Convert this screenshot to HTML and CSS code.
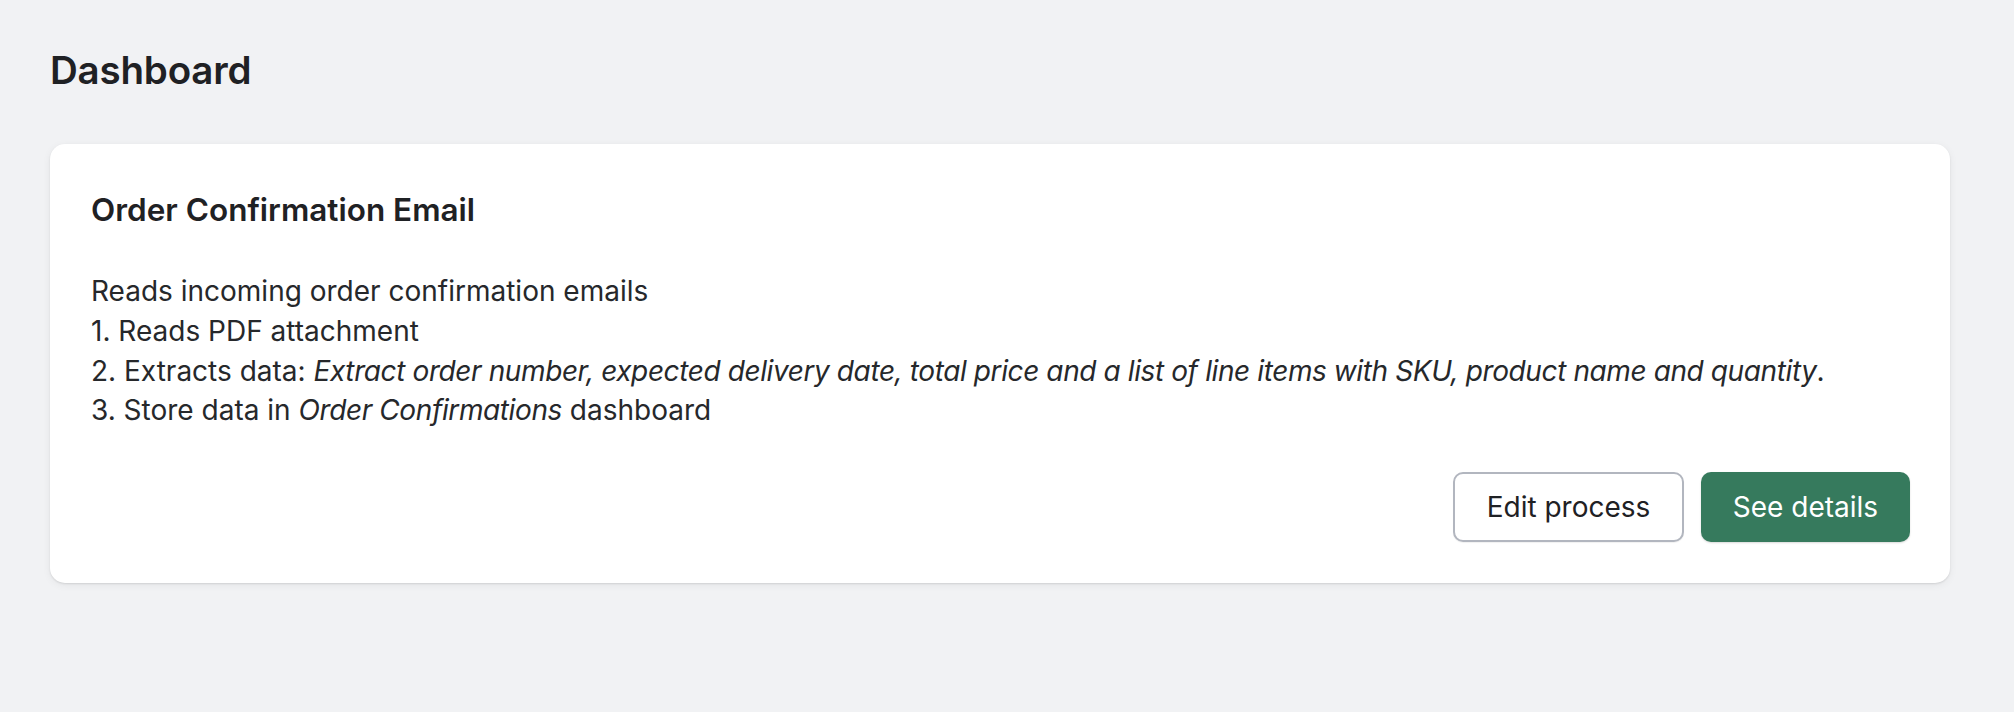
FILE: index.html
```html
<!DOCTYPE html>
<html lang="en">
<head>
<meta charset="utf-8">
<title>Dashboard</title>
<link rel="stylesheet" href="styles.css">
</head>
<body>
<main class="page">
  <h1 class="page-title">Dashboard</h1>
  <section class="card">
    <h2 class="card-title">Order Confirmation Email</h2>
    <div class="card-body">
      <p class="line">Reads incoming order confirmation emails</p>
      <p class="line">1. Reads PDF attachment</p>
      <p class="line">2. Extracts data: <em>Extract order number, expected delivery date, total price and a list of line items with SKU, product name and quantity</em>.</p>
      <p class="line">3. Store data in <em>Order Confirmations</em> dashboard</p>
    </div>
    <div class="card-actions">
      <button class="btn btn-secondary" type="button">Edit process</button>
      <button class="btn btn-primary" type="button">See details</button>
    </div>
  </section>
</main>
</body>
</html>
```

FILE: styles.css
```css
html, body {
  margin: 0;
  padding: 0;
  background: #f1f2f4;
}

body {
  font-family: Inter, "Noto Sans", "Liberation Sans", sans-serif;
  color: #303030;
}

.page {
  padding: 48px 64px 40px 50px;
}

.page-title {
  margin: 0;
  font-size: 38.5px;
  line-height: 44px;
  font-weight: 600;
  color: #1f2124;
  letter-spacing: -0.2px;
}

.card {
  margin-top: 52px;
  background: #ffffff;
  border-radius: 15px;
  padding: 41px 40px 41px 41px;
  box-shadow: 0 1px 2px rgba(0, 0, 0, 0.10), 0 2px 8px rgba(0, 0, 0, 0.06);
}

.card-title {
  margin: 0;
  font-size: 31.5px;
  line-height: 49px;
  font-weight: 600;
  color: #1f2124;
}

.card-body {
  margin-top: 38px;
}

.line {
  margin: 0;
  font-size: 28px;
  line-height: 39.8px;
  color: #26282b;
}

.line em {
  font-style: italic;
  letter-spacing: -0.4px;
}

.card-actions {
  margin-top: 41px;
  display: flex;
  justify-content: flex-end;
  gap: 17px;
}

.btn {
  height: 70px;
  padding: 0;
  font-family: inherit;
  font-size: 28px;
  border-radius: 10px;
  cursor: pointer;
}

.btn-secondary {
  width: 231px;
  background: #ffffff;
  color: #1f2124;
  border: 2px solid #b2b6bf;
  box-shadow: 0 1px 1px rgba(0, 0, 0, 0.06);
}

.btn-primary {
  width: 209px;
  background: #367a5d;
  color: #ffffff;
  border: none;
  box-shadow: 0 1px 2px rgba(0, 0, 0, 0.15);
}
```
